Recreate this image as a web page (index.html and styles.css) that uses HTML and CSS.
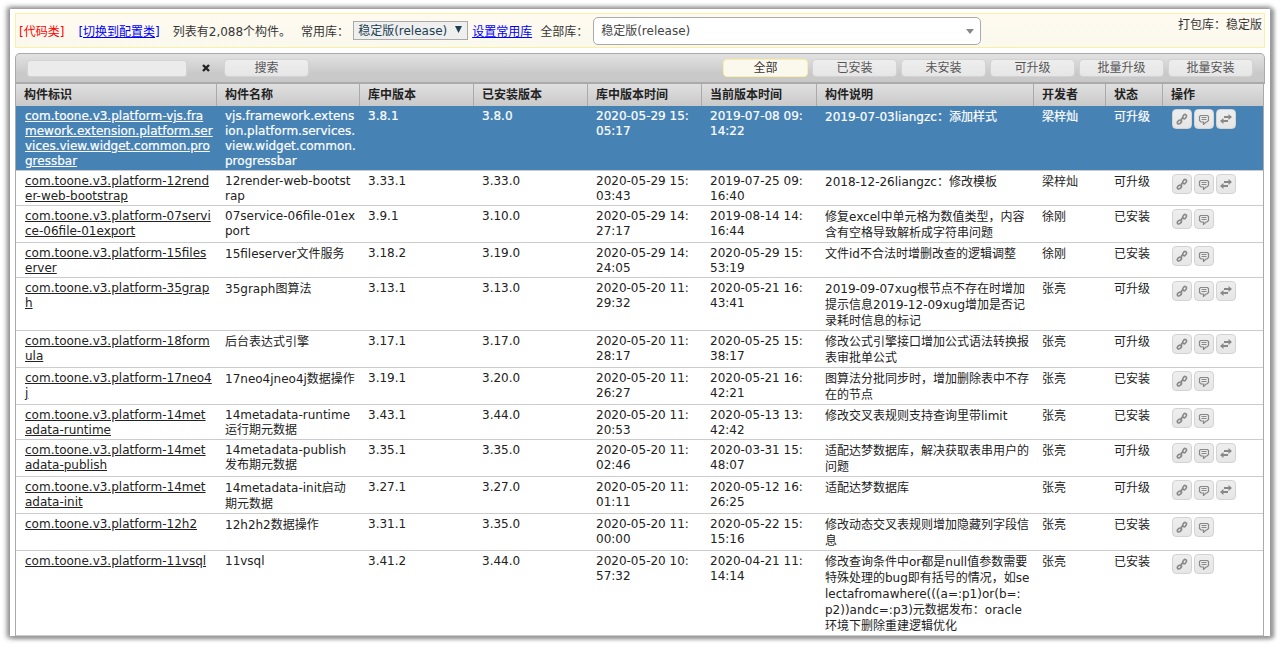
FILE: index.html
```
<!DOCTYPE html>
<html lang="zh-CN">
<head>
<meta charset="utf-8">
<title>构件列表</title>
<link rel="stylesheet" href="styles.css">
</head>
<body>
<svg class="sprite" aria-hidden="true">
  <symbol id="i-link" viewBox="0 0 12 12"><g fill="none" stroke="#888" stroke-width="1.6"><ellipse cx="3.400" cy="9" rx="2.300" ry="1.600" transform="rotate(-40 3.4 9)"/><ellipse cx="8.600" cy="3.600" rx="2.300" ry="1.600" transform="rotate(-60 8.6 3.6)"/><path d="M4.400 8.200 5.600 7V5.600L7.400 4.600"/></g></symbol>
  <symbol id="i-note" viewBox="0 0 12 12"><path d="M2.500 2.500h7l1 1v4l-1.500 1.500H8L5.500 11.500V9H3L1.500 7.500v-4z" fill="none" stroke="#888" stroke-width="1.200"/><path d="M3.500 4.500h5M3.500 6.500h5" stroke="#888"/></symbol>
  <symbol id="i-swap" viewBox="0 0 12 12"><path d="M4 3h4.500V1L12 4 8.500 7V5H4zM8 7H3.500V5L0 8l3.500 3V9H8z" fill="#888"/></symbol>
</svg>
<main class="window">
  <header class="bar">
    <span class="mode">[代码类]</span>
    <a class="switch" href="#">[切换到配置类]</a>
    <span class="count">列表有2,088个构件。</span>
    <label for="fav">常用库：</label>
    <span class="pick pick-small"><select id="fav"><option>稳定版(release)</option></select><svg viewBox="0 0 8 8"><path d="M0 0h8L4 8z" fill="#1c3f53"/></svg></span>
    <a class="setfav" href="#">设置常用库</a>
    <label for="all">全部库：</label>
    <span class="pick pick-large"><select id="all"><option>稳定版(release)</option></select><svg viewBox="0 0 8 5"><path d="M0 0h8L4 5z" fill="#888"/></svg></span>
    <span class="pack">打包库：稳定版</span>
  </header>
  <section class="grid">
    <div class="tools">
      <input class="query" type="text" aria-label="搜索构件">
      <button class="clear" aria-label="清除"><svg viewBox="0 0 8 8"><path d="M1 1l6 6M7 1 1 7" stroke="#222" stroke-width="2.400"/></svg></button>
      <button class="btn">搜索</button>
      <div class="filters">
        <button class="btn active">全部</button><button class="btn">已安装</button><button class="btn">未安装</button><button class="btn">可升级</button><button class="btn">批量升级</button><button class="btn">批量安装</button>
      </div>
    </div>
    <table>
      <colgroup><col class="c-id"><col class="c-name"><col class="c-ver"><col class="c-ver"><col class="c-ver"><col class="c-now"><col><col class="c-dev"><col class="c-state"><col class="c-act"></colgroup>
      <thead><tr><th>构件标识</th><th>构件名称</th><th>库中版本</th><th>已安装版本</th><th>库中版本时间</th><th>当前版本时间</th><th>构件说明</th><th>开发者</th><th>状态</th><th>操作</th></tr></thead>
      <tbody>
        <tr class="selected"><td><a href="#">com.toone.v3.platform-vjs.fra<br>mework.extension.platform.ser<br>vices.view.widget.common.pro<br>gressbar</a></td><td>vjs.framework.extens<br>ion.platform.services.<br>view.widget.common.<br>progressbar</td><td>3.8.1</td><td>3.8.0</td><td class="time">2020-05-29 15:05:17</td><td class="time">2019-07-08 09:14:22</td><td class="zh">2019-07-03liangzc：添加样式</td><td class="zh">梁梓灿</td><td class="zh">可升级</td><td><div class="acts"><button aria-label="链接"><svg><use href="#i-link"/></svg></button><button aria-label="说明"><svg><use href="#i-note"/></svg></button><button aria-label="升级"><svg><use href="#i-swap"/></svg></button></div></td></tr>
        <tr><td><a href="#">com.toone.v3.platform-12rend<br>er-web-bootstrap</a></td><td>12render-web-bootst<br>rap</td><td>3.33.1</td><td>3.33.0</td><td class="time">2020-05-29 15:03:43</td><td class="time">2019-07-25 09:16:40</td><td class="zh">2018-12-26liangzc：修改模板</td><td class="zh">梁梓灿</td><td class="zh">可升级</td><td><div class="acts"><button aria-label="链接"><svg><use href="#i-link"/></svg></button><button aria-label="说明"><svg><use href="#i-note"/></svg></button><button aria-label="升级"><svg><use href="#i-swap"/></svg></button></div></td></tr>
        <tr><td><a href="#">com.toone.v3.platform-07servi<br>ce-06file-01export</a></td><td>07service-06file-01ex<br>port</td><td>3.9.1</td><td>3.10.0</td><td class="time">2020-05-29 14:27:17</td><td class="time">2019-08-14 14:16:44</td><td class="zh">修复excel中单元格为数值类型，内容含有空格导致解析成字符串问题</td><td class="zh">徐刚</td><td class="zh">已安装</td><td><div class="acts"><button aria-label="链接"><svg><use href="#i-link"/></svg></button><button aria-label="说明"><svg><use href="#i-note"/></svg></button></div></td></tr>
        <tr><td><a href="#">com.toone.v3.platform-15files<br>erver</a></td><td class="zh">15fileserver文件服务</td><td>3.18.2</td><td>3.19.0</td><td class="time">2020-05-29 14:24:05</td><td class="time">2020-05-29 15:53:19</td><td class="zh">文件id不合法时增删改查的逻辑调整</td><td class="zh">徐刚</td><td class="zh">已安装</td><td><div class="acts"><button aria-label="链接"><svg><use href="#i-link"/></svg></button><button aria-label="说明"><svg><use href="#i-note"/></svg></button></div></td></tr>
        <tr><td><a href="#">com.toone.v3.platform-35grap<br>h</a></td><td class="zh">35graph图算法</td><td>3.13.1</td><td>3.13.0</td><td class="time">2020-05-20 11:29:32</td><td class="time">2020-05-21 16:43:41</td><td class="zh">2019-09-07xug根节点不存在时增加提示信息2019-12-09xug增加是否记录耗时信息的标记</td><td class="zh">张亮</td><td class="zh">可升级</td><td><div class="acts"><button aria-label="链接"><svg><use href="#i-link"/></svg></button><button aria-label="说明"><svg><use href="#i-note"/></svg></button><button aria-label="升级"><svg><use href="#i-swap"/></svg></button></div></td></tr>
        <tr><td><a href="#">com.toone.v3.platform-18form<br>ula</a></td><td class="zh">后台表达式引擎</td><td>3.17.1</td><td>3.17.0</td><td class="time">2020-05-20 11:28:17</td><td class="time">2020-05-25 15:38:17</td><td class="zh">修改公式引擎接口增加公式语法转换报表审批单公式</td><td class="zh">张亮</td><td class="zh">可升级</td><td><div class="acts"><button aria-label="链接"><svg><use href="#i-link"/></svg></button><button aria-label="说明"><svg><use href="#i-note"/></svg></button><button aria-label="升级"><svg><use href="#i-swap"/></svg></button></div></td></tr>
        <tr><td><a href="#">com.toone.v3.platform-17neo4<br>j</a></td><td class="zh">17neo4jneo4j数据操作</td><td>3.19.1</td><td>3.20.0</td><td class="time">2020-05-20 11:26:27</td><td class="time">2020-05-21 16:42:21</td><td class="zh">图算法分批同步时，增加删除表中不存在的节点</td><td class="zh">张亮</td><td class="zh">已安装</td><td><div class="acts"><button aria-label="链接"><svg><use href="#i-link"/></svg></button><button aria-label="说明"><svg><use href="#i-note"/></svg></button></div></td></tr>
        <tr><td><a href="#">com.toone.v3.platform-14met<br>adata-runtime</a></td><td>14metadata-runtime<br>运行期元数据</td><td>3.43.1</td><td>3.44.0</td><td class="time">2020-05-20 11:20:53</td><td class="time">2020-05-13 13:42:42</td><td class="zh">修改交叉表规则支持查询里带limit</td><td class="zh">张亮</td><td class="zh">已安装</td><td><div class="acts"><button aria-label="链接"><svg><use href="#i-link"/></svg></button><button aria-label="说明"><svg><use href="#i-note"/></svg></button></div></td></tr>
        <tr><td><a href="#">com.toone.v3.platform-14met<br>adata-publish</a></td><td>14metadata-publish<br>发布期元数据</td><td>3.35.1</td><td>3.35.0</td><td class="time">2020-05-20 11:02:46</td><td class="time">2020-03-31 15:48:07</td><td class="zh">适配达梦数据库，解决获取表串用户的问题</td><td class="zh">张亮</td><td class="zh">可升级</td><td><div class="acts"><button aria-label="链接"><svg><use href="#i-link"/></svg></button><button aria-label="说明"><svg><use href="#i-note"/></svg></button><button aria-label="升级"><svg><use href="#i-swap"/></svg></button></div></td></tr>
        <tr><td><a href="#">com.toone.v3.platform-14met<br>adata-init</a></td><td class="zh">14metadata-init启动<br>期元数据</td><td>3.27.1</td><td>3.27.0</td><td class="time">2020-05-20 11:01:11</td><td class="time">2020-05-12 16:26:25</td><td class="zh">适配达梦数据库</td><td class="zh">张亮</td><td class="zh">可升级</td><td><div class="acts"><button aria-label="链接"><svg><use href="#i-link"/></svg></button><button aria-label="说明"><svg><use href="#i-note"/></svg></button><button aria-label="升级"><svg><use href="#i-swap"/></svg></button></div></td></tr>
        <tr><td><a href="#">com.toone.v3.platform-12h2</a></td><td class="zh">12h2h2数据操作</td><td>3.31.1</td><td>3.35.0</td><td class="time">2020-05-20 11:00:00</td><td class="time">2020-05-22 15:15:16</td><td class="zh">修改动态交叉表规则增加隐藏列字段信息</td><td class="zh">张亮</td><td class="zh">已安装</td><td><div class="acts"><button aria-label="链接"><svg><use href="#i-link"/></svg></button><button aria-label="说明"><svg><use href="#i-note"/></svg></button></div></td></tr>
        <tr><td><a href="#">com.toone.v3.platform-11vsql</a></td><td>11vsql</td><td>3.41.2</td><td>3.44.0</td><td class="time">2020-05-20 10:57:32</td><td class="time">2020-04-21 11:14:14</td><td class="zh">修改查询条件中or都是null值参数需要特殊处理的bug即有括号的情况，如selectafromawhere(((a=:p1)or(b=:<br>p2))andc=:p3)元数据发布：oracle<br>环境下删除重建逻辑优化</td><td class="zh">张亮</td><td class="zh">已安装</td><td><div class="acts"><button aria-label="链接"><svg><use href="#i-link"/></svg></button><button aria-label="说明"><svg><use href="#i-note"/></svg></button></div></td></tr>
      </tbody>
    </table>
  </section>
</main>
</body>
</html>
```
FILE: styles.css
```
* { box-sizing: border-box; }
html { background: #fff; }
body { margin: 0; padding: 9px 10px 10px; height: 100vh; }
body, button, input, select { font-family: "DejaVu Sans", "Noto Sans CJK SC", sans-serif; font-size: 12px; color: #222; }
.sprite { position: absolute; width: 0; height: 0; }
.window { height: 100%; overflow: hidden; background: #fff; padding: 4px 5px 0; box-shadow: 3px 1px 4px 1px #999, -1px 0 5px 2px #888; }

.bar { display: flex; align-items: center; height: 35px; padding: 0 2px 0 3px; border: 1px solid #fcefa1; background: linear-gradient(#fffaf0, #faf9ee); white-space: nowrap; color: #363636; }
.mode { color: #f00; }
.bar a { color: #00f; }
.switch { margin-left: 14px; }
.count { margin: 0 10px 0 13px; }
.pick { position: relative; display: flex; }
.pick select { width: 100%; appearance: none; margin: 0; color: #444; }
.pick svg { position: absolute; pointer-events: none; }
.pick-small { width: 115px; margin: 0 4px; }
.pick-small select { height: 19px; padding: 0 4px; border: 1px solid #aaa; border-radius: 0; background: #efefef; color: #1c3f53; }
.pick-small svg { width: 7px; height: 7px; right: 6px; top: 5px; }
.setfav { margin-right: 8px; }
.pick-large { width: 388px; margin-left: 5px; }
.pick-large select { height: 28px; padding: 0 7px; border: 1px solid #aaa; border-radius: 5px; background: #fff; }
.pick-large svg { width: 8px; height: 5px; right: 7px; top: 12px; }
.pack { margin-left: auto; align-self: flex-start; line-height: 22px; }

.grid { margin-top: 5px; }
.tools { display: flex; align-items: center; height: 31px; padding: 0 11px; border: 1px solid #aaa; border-bottom-width: 2px; border-radius: 5px 5px 0 0; background: linear-gradient(#e2e2e2, #c9c9c9 70%); }
.query { width: 160px; height: 17px; margin: 0; padding: 0 4px; border: 1px solid #d3d3d3; border-radius: 3px; background: #ebebeb; }
.clear { display: flex; justify-content: center; width: 37px; padding: 0; border: 0; background: none; }
.clear svg { width: 8px; height: 8px; }
.btn { width: 85px; height: 18px; padding: 0; border: 1px solid #d3d3d3; border-radius: 4px; background: linear-gradient(#eee, #e6e6e6); color: #555; line-height: 16px; }
.active { border-color: #fcefa1; background: #fbf9ee; color: #363636; }
.filters { display: flex; gap: 4px; margin-left: auto; }
.filters .btn { flex: none; }

table { width: calc(100% - 1px); table-layout: fixed; border-collapse: separate; border-spacing: 0; border: solid #aaa; border-width: 0 1px; }
.c-id { width: 201px; }
.c-name { width: 143px; }
.c-ver { width: 114px; }
.c-now { width: 115px; }
.c-dev { width: 72px; }
.c-state { width: 57px; }
.c-act { width: 100px; }
th { height: 22px; padding: 0 8px; text-align: left; font-weight: bold; line-height: 22px; border-right: 1px solid #aaa; background: linear-gradient(#e0e0e0, #c9c9c9); }
th:last-child { border-right: 0; }
td { padding: 3px 2px 1px 8px; border-bottom: 1px solid #ccc; vertical-align: top; line-height: 15px; word-break: break-all; }
td.zh { line-height: 16px; }
td.time { padding-right: 8px; }
td:first-child, td:last-child { padding-left: 9px; }
td a { color: #222; }
.selected td, .selected a { color: #fff; }
.selected td { background: #4682b4; -webkit-text-stroke: 0.2px #fff; }
.acts { display: flex; gap: 2px; }
.acts button { display: flex; align-items: center; justify-content: center; width: 20px; height: 20px; padding: 0; border: 1px solid #d3d3d3; border-radius: 4px; background: linear-gradient(#eee, #e6e6e6); }
.acts svg { width: 12px; height: 12px; flex: none; }
```
